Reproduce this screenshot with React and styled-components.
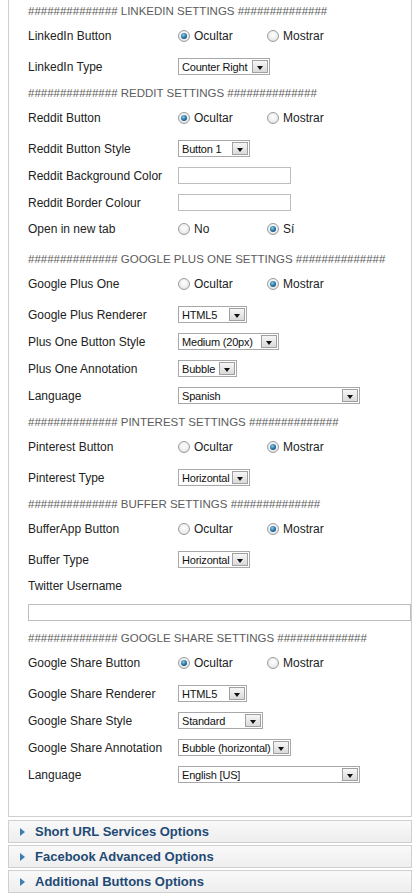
import React from "react";
import styled, { createGlobalStyle, css } from "styled-components";

const GlobalStyle = createGlobalStyle`
  html, body {
    margin: 0;
    padding: 0;
    background: #fff;
  }
  body {
    font-family: "Liberation Sans", Arial, sans-serif;
    overflow: hidden;
  }
`;

const Page = styled.div`
  width: 415px;
  padding-left: 8px;
  box-sizing: border-box;
`;

const Panel = styled.div`
  width: 404px;
  box-sizing: border-box;
  margin-top: -3px;
  border: 1px solid #cfcfcf;
  padding: 0 0 28px 19px;
  background: #fff;
`;

const Header = styled.div`
  height: 25px;
  display: flex;
  align-items: center;
  font-size: 11.5px;
  color: #5c5c5c;
  text-transform: uppercase;
  white-space: nowrap;
`;

const Row = styled.div`
  display: flex;
  align-items: center;
  height: ${(p) => p.$h || 27}px;
  ${(p) =>
    p.$radio &&
    css`
      height: 25px;
      margin-bottom: 5px;
    `}
`;

const Label = styled.div`
  width: 150px;
  flex: none;
  font-size: 12px;
  color: #222;
  white-space: nowrap;
`;

const RadioGroup = styled.div`
  display: flex;
  align-items: center;
`;

const RadioOption = styled.label`
  display: flex;
  align-items: center;
  width: ${(p) => p.$w || 89}px;
  font-size: 12px;
  color: #222;
`;

const RadioDot = styled.span`
  position: relative;
  flex: none;
  width: 12px;
  height: 12px;
  margin-right: 4px;
  box-sizing: border-box;
  border-radius: 50%;
  border: 1px solid #9c9c9c;
  background: radial-gradient(circle at 50% 40%, #ffffff 0%, #ececec 60%, #cdcdcd 100%);
  ${(p) =>
    p.$on &&
    css`
      &::after {
        content: "";
        position: absolute;
        left: 2px;
        top: 2px;
        width: 6px;
        height: 6px;
        border-radius: 50%;
        background: radial-gradient(circle at 40% 35%, #8ccbec 0%, #1f6d9e 55%, #0f3f62 100%);
      }
    `}
`;

const Select = styled.div`
  width: ${(p) => p.$w}px;
  height: 17px;
  box-sizing: border-box;
  border: 1px solid #a8a8a8;
  background: #fff;
  display: flex;
  align-items: center;
  justify-content: space-between;
  padding: 0 1px 0 3px;
  font-size: 11px;
  letter-spacing: -0.2px;
  color: #111;
  white-space: nowrap;
`;

const ArrowBox = styled.span`
  flex: none;
  width: 16px;
  height: 13px;
  box-sizing: border-box;
  border: 1px solid #a0a0a0;
  background: linear-gradient(#f6f6f6, #dadada);
  display: flex;
  align-items: center;
  justify-content: center;
  padding-top: 2px;

  &::before {
    content: "";
    border-left: 3.5px solid transparent;
    border-right: 3.5px solid transparent;
    border-top: 4px solid #111;
  }
`;

const TextInput = styled.input`
  width: ${(p) => p.$w || 113}px;
  height: 17px;
  box-sizing: border-box;
  margin: 0;
  padding: 0 3px;
  border: 1px solid #bdbdbd;
  background: #fff;
  font: 11px "Liberation Sans", Arial, sans-serif;
  outline: none;
`;

const Bar = styled.div`
  width: 404px;
  height: 23px;
  box-sizing: border-box;
  margin-top: ${(p) => (p.$first ? 3 : 2)}px;
  border: 1px solid #cfcfcf;
  background: linear-gradient(#f9f9f9, #eeeeee);
  display: flex;
  align-items: center;
  padding-left: 11px;
  font-size: 13px;
  font-weight: bold;
  color: #1f4a75;
`;

const BarArrow = styled.span`
  width: 0;
  height: 0;
  margin-right: 10px;
  border-top: 4px solid transparent;
  border-bottom: 4px solid transparent;
  border-left: 5px solid #3d7fb0;
`;

const HASH = "##############";

const rows = [
  { t: "h", v: "LinkedIn Settings" },
  { t: "r", l: "LinkedIn Button", o: ["Ocultar", "Mostrar"], c: 0 },
  { t: "s", l: "LinkedIn Type", v: "Counter Right", w: 92 },
  { t: "h", v: "Reddit Settings" },
  { t: "r", l: "Reddit Button", o: ["Ocultar", "Mostrar"], c: 0 },
  { t: "s", l: "Reddit Button Style", v: "Button 1", w: 72 },
  { t: "i", l: "Reddit Background Color" },
  { t: "i", l: "Reddit Border Colour" },
  { t: "r", l: "Open in new tab", o: ["No", "Sí"], c: 1 },
  { t: "h", v: "Google Plus One Settings" },
  { t: "r", l: "Google Plus One", o: ["Ocultar", "Mostrar"], c: 1 },
  { t: "s", l: "Google Plus Renderer", v: "HTML5", w: 69 },
  { t: "s", l: "Plus One Button Style", v: "Medium (20px)", w: 101 },
  { t: "s", l: "Plus One Annotation", v: "Bubble", w: 59 },
  { t: "s", l: "Language", v: "Spanish", w: 182 },
  { t: "h", v: "Pinterest Settings" },
  { t: "r", l: "Pinterest Button", o: ["Ocultar", "Mostrar"], c: 1 },
  { t: "s", l: "Pinterest Type", v: "Horizontal", w: 72 },
  { t: "h", v: "Buffer Settings" },
  { t: "r", l: "BufferApp Button", o: ["Ocultar", "Mostrar"], c: 1 },
  { t: "s", l: "Buffer Type", v: "Horizontal", w: 72 },
  { t: "l", l: "Twitter Username" },
  { t: "w" },
  { t: "h", v: "Google Share Settings" },
  { t: "r", l: "Google Share Button", o: ["Ocultar", "Mostrar"], c: 0 },
  { t: "s", l: "Google Share Renderer", v: "HTML5", w: 69 },
  { t: "s", l: "Google Share Style", v: "Standard", w: 85 },
  { t: "s", l: "Google Share Annotation", v: "Bubble (horizontal)", w: 113 },
  { t: "s", l: "Language", v: "English [US]", w: 182 },
];

const SettingRow = ({ row }) => {
  switch (row.t) {
    case "h":
      return (
        <Header>
          {HASH} {row.v} {HASH}
        </Header>
      );
    case "r":
      return (
        <Row $radio>
          <Label>{row.l}</Label>
          <RadioGroup>
            {row.o.map((opt, i) => (
              <RadioOption key={opt}>
                <RadioDot $on={row.c === i} />
                {opt}
              </RadioOption>
            ))}
          </RadioGroup>
        </Row>
      );
    case "s":
      return (
        <Row>
          <Label>{row.l}</Label>
          <Select $w={row.w}>
            <span>{row.v}</span>
            <ArrowBox />
          </Select>
        </Row>
      );
    case "i":
      return (
        <Row>
          <Label>{row.l}</Label>
          <TextInput type="text" />
        </Row>
      );
    case "l":
      return (
        <Row $h={26}>
          <Label>{row.l}</Label>
        </Row>
      );
    case "w":
      return (
        <Row $h={26}>
          <TextInput type="text" $w={384} />
        </Row>
      );
    default:
      return null;
  }
};

const sections = [
  "Short URL Services Options",
  "Facebook Advanced Options",
  "Additional Buttons Options",
];

export default function App() {
  return (
    <>
      <GlobalStyle />
      <Page>
        <Panel>
          {rows.map((row, i) => (
            <SettingRow key={i} row={row} />
          ))}
        </Panel>
        {sections.map((s, i) => (
          <Bar key={s} $first={i === 0}>
            <BarArrow />
            {s}
          </Bar>
        ))}
      </Page>
    </>
  );
}
